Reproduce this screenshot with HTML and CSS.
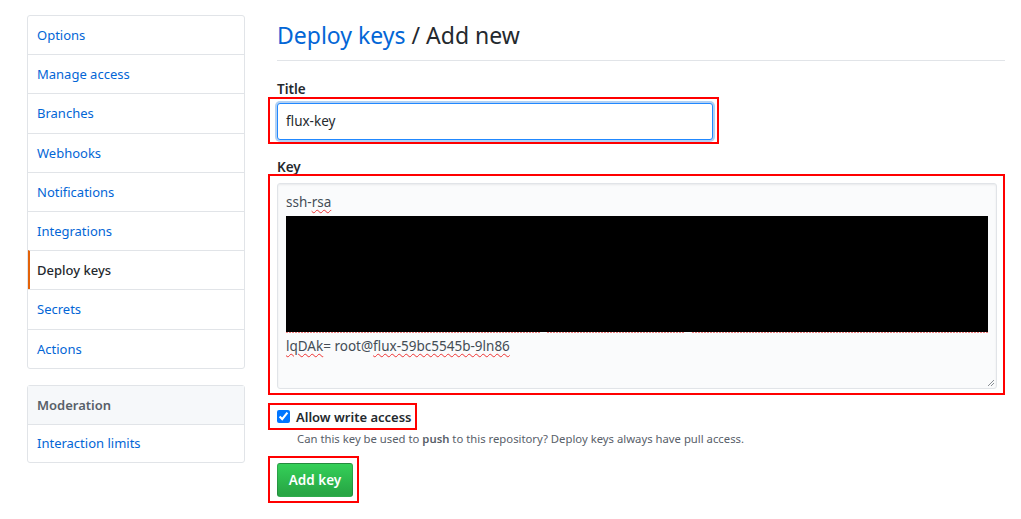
FILE: index.html
```html
<!DOCTYPE html>
<html lang="en">
<head>
<meta charset="utf-8">
<title>Deploy keys / Add new</title>
<link rel="stylesheet" href="styles.css">
</head>
<body>
<div class="page">
  <aside class="sidebar">
    <nav class="menu">
      <a class="menu-item">Options</a>
      <a class="menu-item">Manage access</a>
      <a class="menu-item">Branches</a>
      <a class="menu-item">Webhooks</a>
      <a class="menu-item">Notifications</a>
      <a class="menu-item">Integrations</a>
      <a class="menu-item selected">Deploy keys</a>
      <a class="menu-item">Secrets</a>
      <a class="menu-item">Actions</a>
    </nav>
    <nav class="menu menu-mod">
      <div class="menu-heading">Moderation</div>
      <a class="menu-item">Interaction limits</a>
    </nav>
  </aside>
  <main class="main">
    <h2 class="subhead"><a class="crumb">Deploy keys</a> / Add new</h2>
    <label class="field-label">Title</label>
    <div class="mark mark-title">
      <div class="input">flux-key</div>
    </div>
    <label class="field-label key-label">Key</label>
    <div class="mark mark-key">
      <div class="textarea">
        <div class="ta-line">ssh-<span class="spell">rsa</span></div>
        <div class="redacted"></div>
        <div class="squiggles"><span class="sq sq1"></span><span class="sq sq2"></span><span class="sq sq3"></span></div>
        <div class="ta-line ta-last"><span class="spell">lqDAk</span>= root@<span class="spell">flux-59bc5545b-9ln86</span></div>
        <svg class="grip" width="8" height="8" viewBox="0 0 8 8"><path d="M7 1 L1 7 M7 4 L4 7" stroke="#8a8f95" stroke-width="1"/></svg>
      </div>
    </div>
    <div class="mark mark-check">
      <input type="checkbox" class="check" checked>
      <span class="check-text">Allow write access</span>
    </div>
    <p class="note">Can this key be used to <strong>push</strong> to this repository? Deploy keys always have pull access.</p>
    <div class="mark mark-btn">
      <button class="btn">Add key</button>
    </div>
  </main>
</div>
</body>
</html>
```
FILE: styles.css
```css
html, body {
  margin: 0;
  padding: 0;
  background: #fff;
}
body {
  font-family: "Noto Sans", "Open Sans", "Liberation Sans", sans-serif;
  font-size: 13.5px;
  color: #24292e;
}
.page {
  display: flex;
  gap: 32px;
  padding-left: 27px;
  padding-top: 15px;
  width: 971px;
}
.sidebar {
  width: 218px;
  flex: none;
  display: flex;
  flex-direction: column;
  gap: 16px;
}
.menu {
  border: 1px solid #e1e4e8;
  border-radius: 3px;
  display: flex;
  flex-direction: column;
  background: #fff;
}
.menu-item {
  display: block;
  height: 38.2px;
  line-height: 38.2px;
  padding: 0 9px;
  font-size: 13px;
  color: #0366d6;
  border-top: 1px solid #e1e4e8;
  text-decoration: none;
}
.menu-item:first-child {
  border-top: 0;
}
.menu-item.selected {
  color: #24292e;
  font-weight: 500;
  border-left: 2px solid #e36209;
  padding-left: 7px;
}
.menu-mod .menu-item {
  height: 37px;
  line-height: 37px;
}
.menu-heading {
  height: 38px;
  line-height: 38px;
  padding: 0 9px;
  font-size: 13px;
  background: #f6f8fa;
  color: #586069;
  font-weight: 600;
}
.main {
  flex: 1;
  display: flex;
  flex-direction: column;
  align-items: flex-start;
  padding-top: 5px;
}
.subhead {
  align-self: stretch;
  margin: 0;
  font-size: 23px;
  font-weight: 400;
  line-height: 31px;
  padding-bottom: 9px;
  border-bottom: 1px solid #e1e4e8;
  color: #24292e;
}
.crumb {
  color: #0366d6;
}
.field-label {
  display: block;
  font-weight: 600;
  line-height: 16px;
  margin-top: 20px;
}
.key-label {
  margin-top: 16px;
  line-height: 14px;
}
.mark {
  border: 2px solid #ff0000;
  margin-left: -9px;
}
.mark-title {
  width: 438px;
  padding: 4px 2px 2px 7px;
}
.input {
  box-sizing: border-box;
  width: 436px;
  height: 37px;
  line-height: 35px;
  padding: 0 8px;
  border: 1px solid #2188ff;
  border-radius: 3px;
  box-shadow: 0 0 0 2px rgba(3, 102, 214, 0.3);
  background: #fff;
}
.mark-key {
  width: 720px;
  padding: 7px 6px 4px 7px;
}
.textarea {
  position: relative;
  box-sizing: border-box;
  width: 720px;
  height: 206px;
  border: 1px solid #e1e4e8;
  border-radius: 3px;
  background: #fafbfc;
  padding: 8px 8px;
  box-shadow: inset 0 1px 2px rgba(27, 31, 35, 0.075);
  color: #444d56;
}
.ta-line {
  height: 21px;
  line-height: 21px;
}
.spell {
  text-decoration: underline wavy #e33;
  text-decoration-thickness: 1px;
  text-underline-offset: 2px;
}
.redacted {
  margin-top: 3px;
  height: 116px;
  background: #000;
}
.squiggles {
  display: flex;
  height: 2px;
  gap: 7px;
}
.sq {
  height: 1px;
  background: repeating-linear-gradient(90deg, #f08080 0 2px, transparent 2px 3px);
}
.sq1 { width: 254px; }
.sq2 { width: 138px; }
.sq3 { flex: 1; }
.ta-last {
  margin-top: 2px;
}
.grip {
  position: absolute;
  right: 1px;
  bottom: 1px;
}
.mark-check {
  margin-top: 8px;
  height: 23px;
  padding: 0 4px 0 7px;
  display: flex;
  align-items: center;
  gap: 6px;
}
.check {
  margin: 0;
  width: 13px;
  height: 13px;
  accent-color: #0075ff;
}
.check-text {
  font-size: 13px;
  font-weight: 600;
}
.note {
  margin: 1px 0 0;
  padding-left: 20px;
  font-size: 11.3px;
  line-height: 16px;
  color: #586069;
}
.note strong {
  font-weight: 600;
}
.mark-btn {
  margin-top: 9px;
  padding: 5px 4px 4px 7px;
}
.btn {
  box-sizing: border-box;
  width: 76px;
  height: 34px;
  border: 1px solid rgba(27, 31, 35, 0.2);
  border-radius: 3px;
  background: linear-gradient(-180deg, #34d058 0%, #28a745 90%);
  color: #fff;
  font-family: inherit;
  font-size: 13.5px;
  font-weight: 600;
  padding: 0;
}
```
